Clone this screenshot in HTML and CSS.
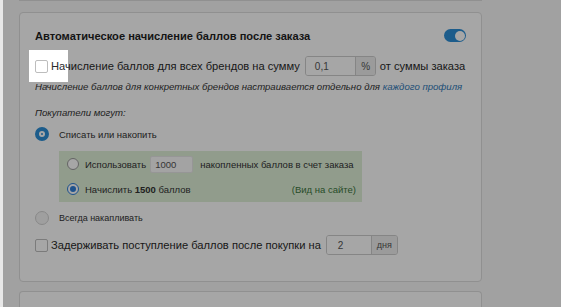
FILE: index.html
```html
<!DOCTYPE html>
<html lang="ru">
<head>
<meta charset="utf-8">
<link rel="stylesheet" href="styles.css">
</head>
<body>
<div class="page">
  <div class="prev-panel"></div>
  <section class="panel">
    <div class="head">
      <h3 class="title">Автоматическое начисление баллов после заказа</h3>
      <span class="toggle"><span class="knob"></span></span>
    </div>
    <div class="row row-sum">
      <span class="cb"></span>
      <span class="lbl">Начисление баллов для всех брендов на сумму</span>
      <span class="igroup g-sum"><span class="inp">0,1</span><span class="addon">%</span></span>
      <span class="lbl">от суммы заказа</span>
    </div>
    <p class="note">Начисление баллов для конкретных брендов настраивается отдельно для <a class="link" href="#">каждого профиля</a></p>
    <p class="note buyers">Покупатели могут:</p>
    <div class="radio-row first">
      <span class="rb big on"></span><span>Списать или накопить</span>
    </div>
    <div class="green">
      <div class="g-row">
        <span class="rb"></span><span>Использовать</span>
        <span class="inp use">1000</span>
        <span class="after">накопленных баллов в счет заказа</span>
      </div>
      <div class="g-row">
        <span class="rb on"></span><span>Начислить <b>1500</b> баллов</span>
        <span class="site">(Вид на сайте)</span>
      </div>
    </div>
    <div class="radio-row always">
      <span class="rb big"></span><span class="small">Всегда накапливать</span>
    </div>
    <div class="row row-delay">
      <span class="cb"></span>
      <span class="lbl">Задерживать поступление баллов после покупки на</span>
      <span class="igroup g-days"><span class="inp">2</span><span class="addon">дня</span></span>
    </div>
  </section>
  <section class="panel next"></section>
</div>
<div class="spot"></div>
</body>
</html>
```

FILE: styles.css
```css
* { box-sizing: border-box; }
html, body { margin: 0; padding: 0; }
body {
  background: #f7f7f7;
  font-family: "Liberation Sans", Arial, sans-serif;
  color: #333;
  width: 561px;
  height: 307px;
  overflow: hidden;
  position: relative;
  border-left: 3px solid #e8e8e8;
}
body::before {
  content: "";
  position: absolute;
  left: -1px; top: 0; bottom: 0;
  width: 1px;
  background: #b4b4b4;
}
.page {
  padding-left: 16px;
}
.prev-panel {
  width: 463px;
  height: 1px;
  border-bottom: 1px solid #ddd;
  margin-bottom: 11px;
}
.panel {
  width: 463px;
  height: 270px;
  background: #fff;
  border: 1px solid #ddd;
  border-radius: 4px;
  padding: 13px 15px 0 15px;
}
.panel.next {
  margin-top: 9px;
  height: 16px;
  border-bottom: none;
  border-radius: 4px 4px 0 0;
}
.head {
  height: 20px;
  display: flex;
  align-items: center;
  justify-content: space-between;
}
.title {
  margin: 0;
  font-size: 11.1px;
  font-weight: bold;
  color: #1f1f1f;
}
.toggle {
  width: 22px;
  height: 13px;
  border-radius: 7px;
  background: #2b8ed6;
  position: relative;
  margin-top: -1px;
}
.knob {
  position: absolute;
  right: 1px; top: 1.5px;
  width: 10px; height: 10px;
  border-radius: 50%;
  background: #fff;
}
.row {
  display: flex;
  align-items: center;
  height: 20px;
  font-size: 11.15px;
  color: #2a2a2a;
  white-space: nowrap;
}
.row .lbl { flex: none; }
.row-sum { margin-top: 10px; }
.cb {
  width: 13px; height: 13px;
  border: 1px solid #bdbdbd;
  border-radius: 2px;
  background: #fff;
  margin-right: 3px;
  flex: none;
}
.igroup {
  display: flex;
  height: 20px;
  border: 1px solid #ccc;
  border-radius: 3px;
  font-size: 10px;
  color: #555;
  overflow: hidden;
  flex: none;
}
.g-sum { width: 71px; margin: 0 4px 0 5px; }
.g-sum .inp { width: 51px; padding-left: 9px; }
.g-sum .addon { width: 20px; }
.g-days { width: 72px; margin-left: 5px; }
.g-days .inp { width: 45px; padding-left: 11px; }
.g-days .addon { width: 27px; font-size: 9px; }
.igroup .inp {
  display: flex; align-items: center;
  background: #fff;
}
.addon {
  display: flex; align-items: center; justify-content: center;
  background: #eee;
  border-left: 1px solid #ccc;
}
.note {
  margin: 4px 0 0;
  height: 14px;
  line-height: 14px;
  font-size: 9.6px;
  font-style: italic;
  color: #333;
  white-space: nowrap;
}
.note.buyers { margin-top: 12px; }
.link { color: #337ab7; text-decoration: none; }
.radio-row {
  display: flex;
  align-items: center;
  height: 16px;
  font-size: 9.5px;
  color: #333;
}
.radio-row.first { margin-top: 6px; }
.radio-row.always { margin-top: 8px; }
.radio-row .small { font-size: 9px; }
.rb {
  flex: none;
  width: 12px; height: 12px;
  border-radius: 50%;
  border: 1px solid #9a9a9a;
  background: #fff;
  margin-right: 6px;
  position: relative;
}
.rb.on {
  border: 1.5px solid #2f7fd8;
}
.rb.on::after {
  content: "";
  position: absolute;
  left: 50%; top: 50%;
  width: 6px; height: 6px;
  margin: -3px 0 0 -3px;
  border-radius: 50%;
  background: #2f7fd8;
}
.rb.big {
  width: 14px; height: 14px;
  margin-right: 10px;
  border: 1px solid #d2d2d2;
  background: #f4f4f4;
}
.rb.big.on {
  border: 4px solid #2b8ed6;
  background: #fff;
}
.rb.big.on::after {
  width: 2px; height: 2px;
  margin: -1px 0 0 -1px;
  background: #2b8ed6;
}
.green {
  margin: 9px 0 0 24px;
  width: 303px;
  height: 51px;
  background: #dff0d8;
  padding: 4px 6px 0 8px;
  display: flex;
  flex-direction: column;
  gap: 7px;
  font-size: 9.5px;
  color: #333;
}
.g-row {
  display: flex;
  align-items: center;
  height: 18px;
  white-space: nowrap;
}
.inp.use {
  width: 43px;
  height: 17px;
  margin-left: 4px;
  margin-right: 7px;
  background: #fafafa;
  border: 1px solid #e6e6e6;
  border-radius: 2px;
  display: flex; align-items: center;
  padding-left: 4px;
  color: #555;
}
.site {
  margin-left: auto;
  color: #3c763d;
}
.row-delay { margin-top: 9px; }
.spot {
  position: absolute;
  left: 26px; top: 50px;
  width: 39px; height: 32px;
  box-shadow: 0 0 0 2000px rgba(0,0,0,0.35);
}
```
